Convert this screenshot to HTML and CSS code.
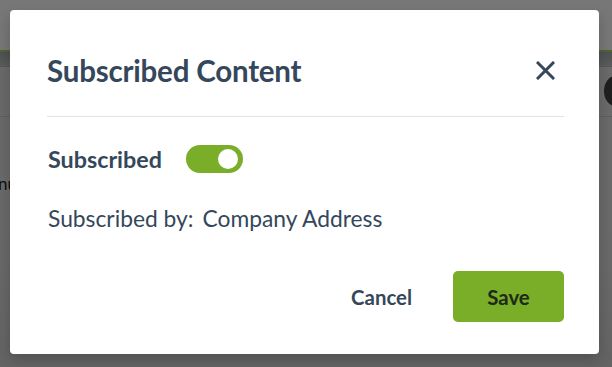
FILE: index.html
```html
<!DOCTYPE html>
<html>
<head>
<meta charset="utf-8">
<link rel="stylesheet" href="styles.css">
</head>
<body>
<div class="page">
  <div class="topbar"></div>
  <div class="subbar"><span class="avatar"></span></div>
  <div class="section"></div>
  <div class="pagetext">nu</div>
</div>
<div class="overlay"></div>
<div class="modal">
  <div class="modal-head">
    <h1 class="title">Subscribed Content</h1>
    <button class="close" aria-label="Close">
      <svg width="19" height="19" viewBox="0 0 19 19"><path d="M2 2L17 17M17 2L2 17" stroke="#34475b" stroke-width="3" stroke-linecap="square" fill="none"/></svg>
    </button>
  </div>
  <div class="divider"></div>
  <div class="row toggle-row">
    <span class="label">Subscribed</span>
    <span class="switch"><span class="knob"></span></span>
  </div>
  <div class="row info-row">
    <span>Subscribed by:</span>
    <span>Company Address</span>
  </div>
  <div class="actions">
    <button class="btn-cancel">Cancel</button>
    <button class="btn-save">Save</button>
  </div>
</div>
</body>
</html>
```
FILE: styles.css
```css
* { box-sizing: border-box; }
html, body { margin: 0; padding: 0; }
body {
  width: 612px;
  height: 367px;
  overflow: hidden;
  background: #e2e2e2;
  font-family: "Lato", "Noto Sans", sans-serif;
  position: relative;
}
.page { height: 367px; background: linear-gradient(#e4e4e4 60%, #d6d6d6 100%); }
.topbar { height: 52px; background: #fefefe; border-bottom: 2px solid #a6d860; }
.subbar { height: 15px; background: linear-gradient(#a8aaad, #c4c6c8); border-bottom: 1px solid #b8b8b8; position: relative; }
.avatar { position: absolute; right: -14px; top: 24px; width: 22px; height: 30px; border-radius: 50%; background: #444; }
.section { height: 50px; border-bottom: 1px solid #cacaca; }
.pagetext { margin-top: 56px; font-size: 17px; color: #222; margin-left: -2px; }
.overlay {
  position: absolute; inset: 0;
  background: #000;
  opacity: 0.535;
}
.modal {
  position: absolute;
  left: 10px; top: 10px;
  width: 589px; height: 344px;
  background: #fff;
  border-radius: 4px;
  box-shadow: 0 6px 14px rgba(0,0,0,0.2);
  padding: 0 35px 0 37px;
  color: #34475b;
}
.modal-head {
  display: flex; align-items: center; justify-content: space-between;
  height: 106px;
  padding-top: 14px;
  padding-left: 0;
}
.title { margin: 0; font-size: 29.5px; font-weight: 700; letter-spacing: -0.2px; color: #34475b; }
.close { background: none; border: 0; padding: 0; margin-right: 9px; width: 19px; height: 19px; display: flex; }
.divider { height: 1px; background: #e3e3e3; }
.row { display: flex; align-items: center; padding-left: 1px; }
.toggle-row { margin-top: 28px; gap: 24px; }
.label { font-size: 23.3px; font-weight: 700; }
.switch {
  width: 57px; height: 28px; border-radius: 14px; background: #7aad28;
  position: relative; display: inline-block;
}
.knob { position: absolute; right: 5px; top: 4px; width: 20px; height: 20px; border-radius: 50%; background: #fff; }
.info-row { margin-top: 31px; gap: 9px; font-size: 22.8px; font-weight: 400; }
.actions { display: flex; justify-content: flex-end; align-items: center; margin-top: 39px; gap: 41px; }
.btn-cancel { background: none; border: 0; font: inherit; font-size: 20.4px; font-weight: 700; color: #34475b; padding: 0; }
.btn-save {
  width: 111px; height: 51px; border: 0; border-radius: 5px;
  background: #7aad28; color: #1d2a17; font: inherit; font-size: 20.4px; font-weight: 700;
}
```
